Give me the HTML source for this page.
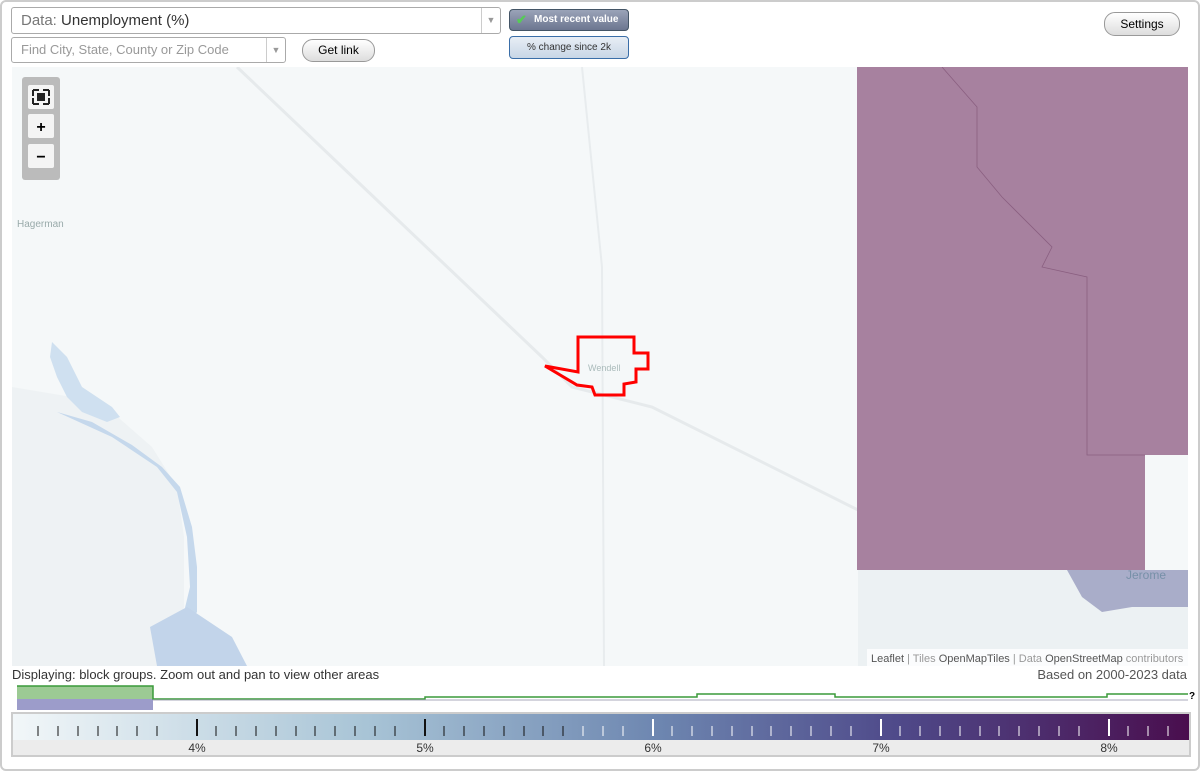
<!DOCTYPE html>
<html><head><meta charset="utf-8"><style>
body{margin:0;width:1200px;height:771px;background:#fff;font-family:"Liberation Sans",sans-serif;position:relative;overflow:hidden}
.frame{position:absolute;left:0;top:0;width:1196px;height:767px;border:2px solid #ccc;border-radius:6px}
.sel{position:absolute;border:1px solid #aaa;border-radius:3px;background:#fff;box-sizing:border-box}
.arrow{position:absolute;right:0;top:0;bottom:0;width:18px;border-left:1px solid #ccc;color:#999;font-size:9px;text-align:center}
.btn{position:absolute;border:1px solid #999;border-radius:11px;background:linear-gradient(#fff,#ddd);font-size:12px;text-align:center;box-sizing:border-box}
</style></head><body>
<div class="frame"></div>
<div class="sel" style="left:11px;top:7px;width:490px;height:27px;font-size:15px;line-height:25px;padding-left:9px;color:#333"><span style="color:#777">Data:</span> Unemployment (%)<div class="arrow" style="line-height:25px">▼</div></div>
<div class="sel" style="left:11px;top:37px;width:275px;height:26px;font-size:13px;line-height:24px;padding-left:9px;color:#999">Find City, State, County or Zip Code<div class="arrow" style="line-height:24px">▼</div></div>
<div class="btn" style="left:302px;top:39px;width:73px;height:23px;line-height:21px">Get link</div>
<div style="position:absolute;left:509px;top:9px;width:120px;height:22px;border:1px solid #456;border-radius:4px;background:linear-gradient(#9aa3b8,#6c7690);color:#fff;font-size:10px;font-weight:bold;line-height:20px;box-sizing:border-box;padding-left:24px">Most recent value<span style="position:absolute;left:6px;top:0;color:#5c5;font-size:13px">✔</span></div>
<div style="position:absolute;left:509px;top:36px;width:120px;height:23px;border:1px solid #3a6ea8;border-radius:4px;background:linear-gradient(#e8eef5,#c8d6e6);color:#333;font-size:10px;line-height:21px;text-align:center;box-sizing:border-box">% change since 2k</div>
<div class="btn" style="left:1104px;top:12px;width:76px;height:24px;line-height:22px">Settings</div>
<svg style="position:absolute;left:12px;top:67px" width="1176" height="599">
<rect width="1176" height="599" fill="#f5f8f9"/>
<path d="M0 320 L60 330 L100 345 L140 380 L165 420 L172 470 L172 540 L150 599 L0 599Z" fill="#eef2f4"/>
<path d="M40 275 L55 290 L60 300 L70 320 L85 330 L100 340 L108 350 L95 355 L70 345 L55 330 L45 310 L38 290Z" fill="#cfe0f0"/>
<path d="M45 345 L100 370 L145 400 L165 425 L175 470 L178 520 L172 545 L162 560 L168 568 L185 545 L185 500 L180 460 L168 420 L150 400 L120 378 L80 355Z" fill="#c5d8ec"/>
<path d="M138 560 L175 540 L220 570 L235 599 L145 599Z" fill="#c2d4ea"/>
<path d="M225 0 L530 290 L560 320 L640 340 L900 470 L1040 480 L1100 600" stroke="#e6eaec" stroke-width="3" fill="none"/>
<path d="M570 0 L590 200 L592 599" stroke="#e8ecee" stroke-width="2" fill="none"/>
<rect x="845" y="0" width="288" height="503" fill="#a7819f"/>
<rect x="1133" y="0" width="43" height="388" fill="#a7819f"/>
<rect x="846" y="503" width="330" height="96" fill="#ecf1f3"/>
<path d="M1055 503 L1176 503 L1176 540 L1120 540 L1090 545 L1070 530Z" fill="#a9adc9"/>
<path d="M930 0 L965 40 L965 100 L990 130 L1040 180 L1030 200 L1075 210 L1075 388 L1133 388" stroke="#8a5f80" stroke-width="0.8" fill="none"/>
<text x="1114" y="512" font-size="12" fill="#7790a8">Jerome</text>
<text x="5" y="160" font-size="10" fill="#9aa">Hagerman</text>
<text x="576" y="304" font-size="9" fill="#abb">Wendell</text>
<path d="M533 299 L566 305 L566 270 L622 270 L622 286 L636 286 L636 302 L624 302 L624 315 L612 317 L612 328 L583 328 L580 320 L565 318Z" fill="none" stroke="#f00" stroke-width="3"/>
<rect x="10" y="10" width="38" height="103" rx="3" fill="#bbb"/>
<rect x="16" y="18" width="26" height="24" rx="2" fill="#f4f4f4"/>
<rect x="16" y="47" width="26" height="24" rx="2" fill="#f4f4f4"/>
<rect x="16" y="77" width="26" height="24" rx="2" fill="#f4f4f4"/>
<path d="M21 23h6M21 23v6M37 23h-6M37 23v6M21 37h6M21 37v-6M37 37h-6M37 37v-6" stroke="#222" stroke-width="2"/>
<rect x="25" y="26" width="8" height="8" fill="#222"/>
<text x="29" y="65" font-size="16" font-weight="bold" text-anchor="middle">+</text>
<text x="29" y="95" font-size="16" font-weight="bold" text-anchor="middle">−</text>
<rect x="855" y="582" width="321" height="17" fill="#fff" opacity=".8"/>
<text x="859" y="595" font-size="11" fill="#999"><tspan fill="#555">Leaflet</tspan> | Tiles <tspan fill="#555">OpenMapTiles</tspan> | Data <tspan fill="#555">OpenStreetMap</tspan> contributors</text>
</svg>
<div style="position:absolute;left:12px;top:667px;font-size:13px;color:#333">Displaying: block groups. Zoom out and pan to view other areas</div>
<div style="position:absolute;right:13px;top:667px;font-size:13px;color:#555">Based on 2000-2023 data</div>
<svg style="position:absolute;left:0;top:684px" width="1200" height="28">
<rect x="17" y="2" width="136" height="13" fill="#9cca94"/>
<rect x="17" y="15" width="136" height="11" fill="#9c9cca"/>
<path d="M17 2 L153 2 L153 15 L425 15 L425 13 L697 13 L697 10 L835 10 L835 13 L1107 13 L1107 10 L1188 10" stroke="#3a9a3a" stroke-width="1.5" fill="none"/>
<path d="M153 16 L1188 16" stroke="#aab" stroke-width="1"/>
<text x="1189" y="15" font-size="10" font-weight="bold">?</text>
</svg>
<div style="position:absolute;left:11px;top:712px;width:1180px;height:45px;border:2px solid #ccc;box-sizing:border-box;background:#ececec"></div>
<svg style="position:absolute;left:13px;top:714px" width="1176" height="41">
<defs><linearGradient id="g"><stop offset="0" stop-color="#f2f7f9"/><stop offset=".3" stop-color="#a8c4d6"/><stop offset=".55" stop-color="#6d86b0"/><stop offset=".75" stop-color="#4f4a8a"/><stop offset="1" stop-color="#4a0e4e"/></linearGradient></defs>
<rect width="1176" height="26" fill="url(#g)"/>
<text x="184" y="38" font-size="12" fill="#333" text-anchor="middle">4%</text>
<text x="412" y="38" font-size="12" fill="#333" text-anchor="middle">5%</text>
<text x="640" y="38" font-size="12" fill="#333" text-anchor="middle">6%</text>
<text x="868" y="38" font-size="12" fill="#333" text-anchor="middle">7%</text>
<text x="1096" y="38" font-size="12" fill="#333" text-anchor="middle">8%</text>
<path d="M25 12v10M45 12v10M65 12v10M85 12v10M104 12v10M124 12v10M144 12v10M203 12v10M223 12v10M243 12v10M263 12v10M283 12v10M302 12v10M322 12v10M342 12v10M362 12v10M382 12v10M431 12v10M451 12v10M471 12v10M491 12v10M511 12v10M530 12v10M550 12v10" stroke="#111"/>
<path d="M184 5v17M412 5v17" stroke="#111" stroke-width="2"/>
<path d="M570 12v10M590 12v10M610 12v10M659 12v10M679 12v10M699 12v10M719 12v10M739 12v10M758 12v10M778 12v10M798 12v10M818 12v10M838 12v10M887 12v10M907 12v10M927 12v10M947 12v10M967 12v10M986 12v10M1006 12v10M1026 12v10M1046 12v10M1066 12v10M1115 12v10M1135 12v10M1155 12v10" stroke="#fff"/>
<path d="M640 5v17M868 5v17M1096 5v17" stroke="#fff" stroke-width="2"/>
</svg>
</body></html>
